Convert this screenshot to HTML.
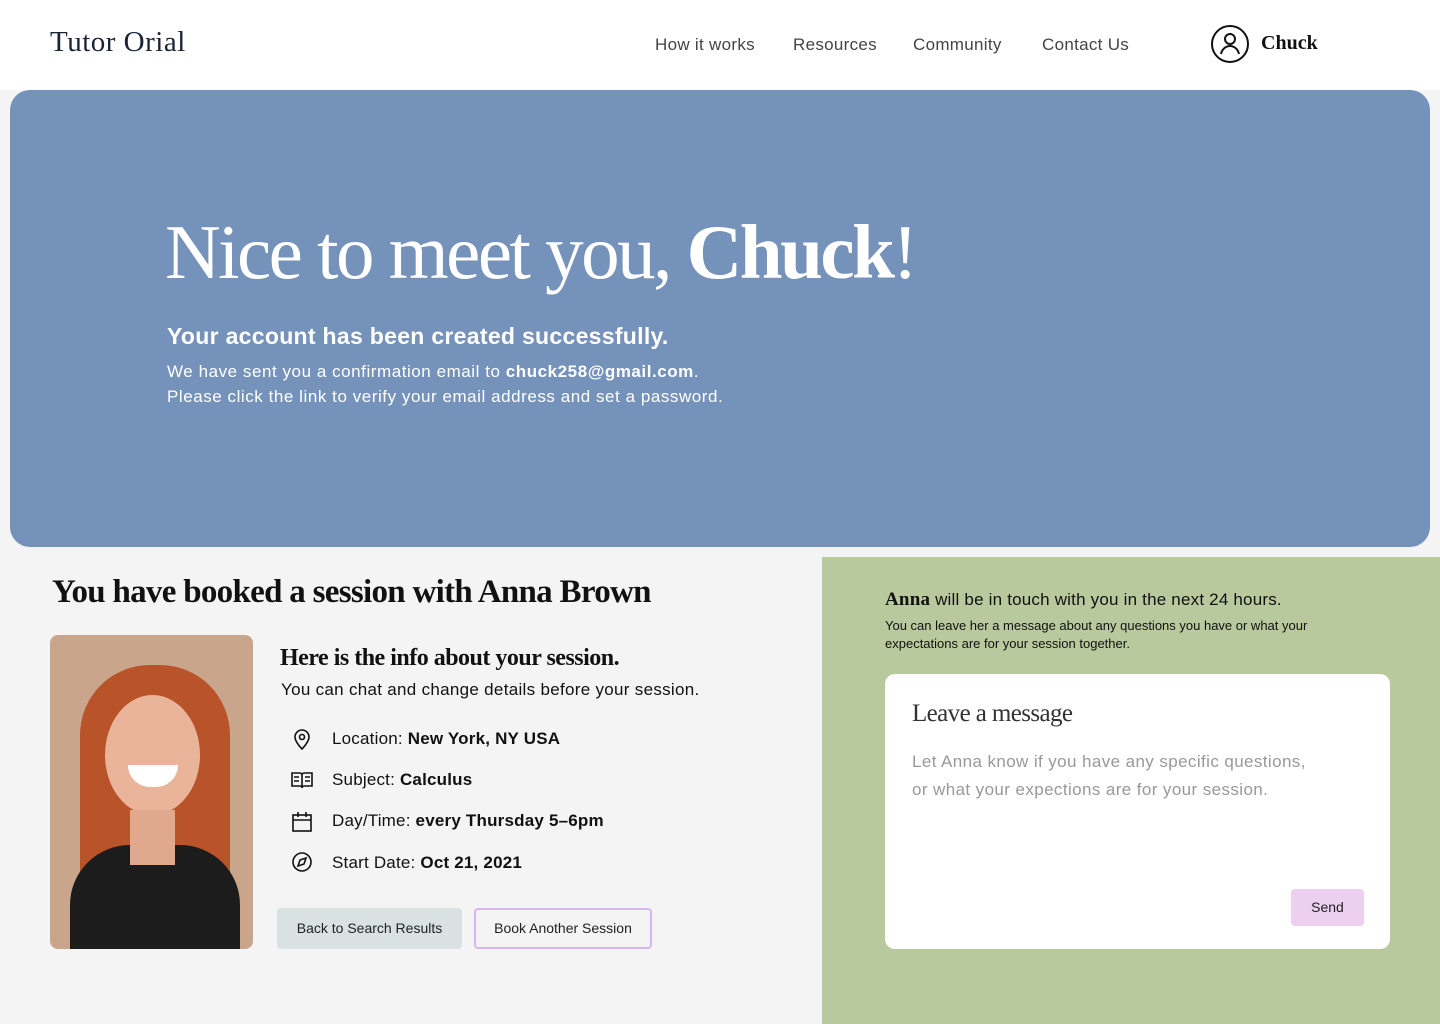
<!DOCTYPE html>
<html><head><meta charset="utf-8"><style>
*{margin:0;padding:0;box-sizing:border-box}
body{width:1440px;height:1024px;background:#f4f4f4;font-family:"Liberation Sans",sans-serif;position:relative;overflow:hidden;color:#111}
.abs{position:absolute}
.serif{font-family:"Liberation Serif",serif}
</style></head><body>
<div class="abs" style="left:0;top:0;width:1440px;height:90px;background:#fff"></div>
<div class="abs serif" style="left:50px;top:26px;font-size:29px;color:#1a2433;letter-spacing:0.5px">Tutor Orial</div>
<div class="abs" style="left:655px;top:35px;font-size:17px;color:#444;letter-spacing:0.3px">
<span style="position:absolute;left:0;white-space:nowrap">How it works</span>
<span style="position:absolute;left:138px;white-space:nowrap">Resources</span>
<span style="position:absolute;left:258px;white-space:nowrap">Community</span>
<span style="position:absolute;left:387px;white-space:nowrap">Contact Us</span>
</div>
<svg class="abs" style="left:1210px;top:24px" width="40" height="40" viewBox="0 0 40 40" fill="none" stroke="#111" stroke-width="2"><circle cx="20" cy="20" r="18"/><circle cx="20" cy="15" r="5"/><path d="M11 30c1-5 5-8 9-8s8 3 9 8"/></svg>
<div class="abs serif" style="left:1261px;top:32px;font-size:20px;font-weight:bold;color:#111">Chuck</div>

<div class="abs" style="left:10px;top:90px;width:1420px;height:457px;background:#7592ba;border-radius:20px"></div>
<div class="abs serif" style="left:165px;top:208px;font-size:77px;color:#fff;letter-spacing:-2.5px;white-space:nowrap">Nice to meet you, <b>Chuck</b>!</div>
<div class="abs" style="left:167px;top:323px;font-size:23px;font-weight:bold;color:#fff;letter-spacing:0.3px">Your account has been created successfully.</div>
<div class="abs" style="left:167px;top:359px;font-size:17px;line-height:25px;color:#fff;letter-spacing:0.55px">We have sent you a confirmation email to <b>chuck258@gmail.com</b>.<br>Please click the link to verify your email address and set a password.</div>

<div class="abs serif" style="left:52px;top:574px;font-size:33px;font-weight:bold;color:#111;letter-spacing:-0.7px;white-space:nowrap">You have booked a session with Anna Brown</div>
<div class="abs" style="left:50px;top:635px;width:203px;height:314px;border-radius:8px;overflow:hidden;background:#c9a58c">
<div class="abs" style="left:30px;top:30px;width:150px;height:300px;border-radius:70px 70px 10px 10px;background:#b8532a"></div>
<div class="abs" style="left:55px;top:60px;width:95px;height:120px;border-radius:50%;background:#e9b49a"></div>
<div class="abs" style="left:78px;top:130px;width:50px;height:22px;border-radius:0 0 25px 25px;background:#fff"></div>
<div class="abs" style="left:20px;top:210px;width:170px;height:120px;border-radius:60px 60px 0 0;background:#1c1c1c"></div>
<div class="abs" style="left:80px;top:175px;width:45px;height:55px;background:#e0a88c"></div>
</div>
<div class="abs serif" style="left:280px;top:645px;font-size:24px;font-weight:bold;letter-spacing:-0.5px">Here is the info about your session.</div>
<div class="abs" style="left:281px;top:680px;font-size:17px;letter-spacing:0.3px">You can chat and change details before your session.</div>
<svg class="abs" style="left:290px;top:728px" width="24" height="150" viewBox="0 0 24 150" fill="none" stroke="#111" stroke-width="1.6">
<path d="M12 21s-7-7-7-12a7 7 0 0114 0c0 5-7 12-7 12z"/><circle cx="12" cy="9" r="2.5"/>
<path d="M2 45h8a2 2 0 012 2v13a2 2 0 00-2-2H2zM22 45h-8a2 2 0 00-2 2v13a2 2 0 012-2h8zM4 49h5M4 53h5M15 49h5M15 53h5"/>
<rect x="3" y="87" width="18" height="16"/><path d="M3 92h18M8 84v5M16 84v5"/>
<circle cx="12" cy="134" r="9"/><path d="M16 130l-6 2-2 6 6-2z"/>
</svg>
<div class="abs" style="left:332px;top:728px;font-size:17px;line-height:22px;letter-spacing:0.2px">
<div style="position:absolute;top:0;white-space:nowrap">Location: <b>New York, NY USA</b></div>
<div style="position:absolute;top:41px;white-space:nowrap">Subject: <b>Calculus</b></div>
<div style="position:absolute;top:82px;white-space:nowrap">Day/Time: <b>every Thursday 5–6pm</b></div>
<div style="position:absolute;top:124px;white-space:nowrap">Start Date: <b>Oct 21, 2021</b></div>
</div>
<div class="abs" style="left:277px;top:908px;width:185px;height:41px;border-radius:4px;background:#d9e1e3;font-size:14px;line-height:41px;text-align:center;color:#222">Back to Search Results</div>
<div class="abs" style="left:474px;top:908px;width:178px;height:41px;border-radius:4px;border:2px solid #d8b5f0;font-size:14px;line-height:37px;text-align:center;color:#222">Book Another Session</div>

<div class="abs" style="left:822px;top:557px;width:618px;height:467px;background:#b9c99e"></div>
<div class="abs" style="left:885px;top:589px;font-size:17px;letter-spacing:0.2px"><b class="serif" style="font-size:19px">Anna</b> will be in touch with you in the next 24 hours.</div>
<div class="abs" style="left:885px;top:617px;font-size:13px;line-height:18px;width:460px">You can leave her a message about any questions you have or what your expectations are for your session together.</div>
<div class="abs" style="left:885px;top:674px;width:505px;height:275px;background:#fff;border-radius:10px"></div>
<div class="abs serif" style="left:912px;top:700px;font-size:25px;color:#333;letter-spacing:-0.6px">Leave a message</div>
<div class="abs" style="left:912px;top:748px;font-size:17px;line-height:28px;color:#999;letter-spacing:0.4px">Let Anna know if you have any specific questions,<br>or what your expections are for your session.</div>
<div class="abs" style="left:1291px;top:889px;width:73px;height:37px;border-radius:4px;background:#edcfef;font-size:14px;line-height:37px;text-align:center;color:#222">Send</div>
</body></html>
